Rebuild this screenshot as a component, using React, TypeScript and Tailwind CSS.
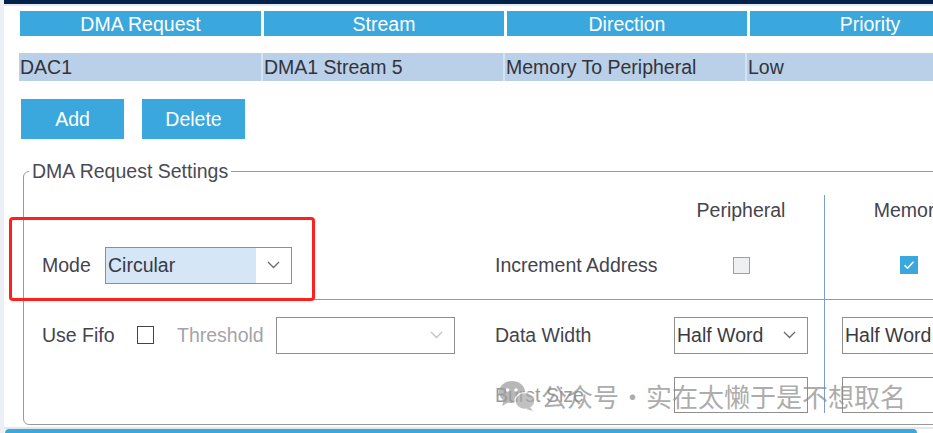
import React from 'react';

const Chevron = ({ color = '#6b6b6b' }: { color?: string }) => (
  <svg width="13" height="8" viewBox="0 0 13 8" fill="none">
    <path d="M1 1l5.5 5.5L12 1" stroke={color} strokeWidth="1.3" />
  </svg>
);

type SelectProps = {
  value?: string;
  width: string;
  fill?: string;
  chevron?: string;
  arrow?: boolean;
};

const Select = ({ value = '', width, fill = 'bg-white', chevron, arrow = true }: SelectProps) => (
  <div className={`flex h-[37px] ${width} border border-[#8e8e8e] bg-white`}>
    <div className={`flex flex-1 items-center pl-[2px] ${fill} text-[#3a3a44]`}>{value}</div>
    {arrow && (
      <div className="flex w-[35px] items-center justify-center">
        <Chevron color={chevron} />
      </div>
    )}
  </div>
);

const tableHeaders = ['DMA Request', 'Stream', 'Direction', 'Priority'];
const tableRow = ['DAC1', 'DMA1 Stream 5', 'Memory To Peripheral', 'Low'];

export default function App() {
  return (
    <div className="relative flex h-[433px] w-[933px] overflow-hidden bg-white font-['Liberation_Sans',Arial,sans-serif] text-[19.5px] leading-[22px]">
      {/* window edge */}
      <div className="w-[4px] shrink-0 bg-[#eceff3]" />

      <div className="flex min-w-0 flex-1 flex-col">
        <div className="h-[4px] bg-[#02214b]" />
        <div className="h-[2px] bg-[#e6e9ee]" />

        <div className="flex flex-1 flex-col pl-[16px]">
          {/* request table */}
          <div className="mt-[5px] grid grid-cols-[241px_240px_240px_240px] gap-[3px]">
            {tableHeaders.map((h) => (
              <div key={h} className="flex h-[25px] items-center justify-center bg-[#3aa8dc] text-white">
                {h}
              </div>
            ))}
          </div>
          <div className="mt-[17px] -ml-[1px] grid grid-cols-[242px_240px_240px_240px] gap-[2px] bg-[#d6e2ef]">
            {tableRow.map((c) => (
              <div key={c} className="flex h-[28px] items-center bg-[#b9d0e8] pl-[1px] text-[#33333b]">
                {c}
              </div>
            ))}
          </div>

          <div className="mt-[18px] flex gap-[18px] pl-[1px]">
            <button className="h-[40px] w-[103px] bg-[#3aa8dc] text-white">Add</button>
            <button className="h-[40px] w-[103px] bg-[#3aa8dc] text-white">Delete</button>
          </div>

          {/* settings group */}
          <fieldset className="mt-[21px] ml-[3px] w-[1000px] rounded-[6px] border border-[#9a9a9a] p-0">
            <legend className="ml-[5px] px-[3px] text-[#4a4a55]">DMA Request Settings</legend>

            <div className="grid grid-cols-[471px_163px_166px_1px_168px] grid-rows-[36px_68px_1px_70px_43px] pt-[13px] pb-[11px] text-[#44444e]">
              {/* row 1 */}
              <div />
              <div />
              <div className="flex justify-center pt-[4px]">Peripheral</div>
              <div className="row-span-5 bg-[#7f9bd6]" />
              <div className="flex justify-center pt-[4px]">Memory</div>

              {/* row 2 */}
              <div className="flex items-center pl-[18px]">
                <span className="w-[63px]">Mode</span>
                <Select value="Circular" width="w-[187px]" fill="bg-[#d5e6f6]" />
              </div>
              <div className="flex items-center">Increment Address</div>
              <div className="flex items-center justify-center">
                <div className="h-[17px] w-[17px] border border-[#a0a0a0] bg-[#eef0f3]" />
              </div>
              <div className="flex items-center justify-center">
                <div className="flex h-[18px] w-[18px] items-center justify-center bg-[#3aa8dc]">
                  <svg width="12" height="10" viewBox="0 0 12 10" fill="none">
                    <path d="M1.5 5.2l3 3L10.5 1.8" stroke="white" strokeWidth="1.6" />
                  </svg>
                </div>
              </div>

              {/* divider */}
              <div className="col-span-3 bg-[#7f9bd6]" />
              <div className="bg-[#7f9bd6]" />

              {/* row 3 */}
              <div className="flex items-center pl-[18px]">
                <span className="w-[95px]">Use Fifo</span>
                <div className="h-[18px] w-[17px] border-[1.5px] border-[#444]" />
                <span className="ml-[23px] w-[99px] text-[#a3a3a8]">Threshold</span>
                <Select width="w-[179px]" chevron="#c2c2c2" />
              </div>
              <div className="flex items-center">Data Width</div>
              <div className="flex items-center justify-center">
                <Select value="Half Word" width="w-[134px]" />
              </div>
              <div className="flex items-center justify-center">
                <Select value="Half Word" width="w-[134px]" />
              </div>

              {/* row 4 */}
              <div />
              <div className="flex items-end pb-[7px] text-[#9a9aa0]">Burst Size</div>
              <div className="flex items-end justify-center">
                <div className="h-[36px] w-[134px] border border-[#8e8e8e]" />
              </div>
              <div className="flex items-end justify-center">
                <div className="h-[36px] w-[134px] border border-[#8e8e8e]" />
              </div>
            </div>
          </fieldset>

          <div className="mt-[2px] -ml-[16px] h-[2px] bg-[#e3e6ea]" />
          <div className="-ml-[15px] h-[4px] w-[912px] rounded-t-[5px] bg-[#3aa8dc]" />
        </div>
      </div>

      {/* highlight box */}
      <div className="pointer-events-none absolute left-[9px] top-[217px] h-[84px] w-[306px] rounded-[4px] border-[3px] border-[#ff1f1f]" />

      {/* watermark */}
      <div className="pointer-events-none absolute left-[498px] top-[380px] flex items-center opacity-70">
        <svg width="38" height="32" viewBox="0 0 38 32" className="mr-[5px]">
          <ellipse cx="14" cy="12" rx="13" ry="11" fill="#9a9a9a" />
          <path d="M6 20l-2 6 7-4z" fill="#9a9a9a" />
          <circle cx="9.5" cy="10" r="1.8" fill="white" />
          <circle cx="18" cy="10" r="1.8" fill="white" />
          <ellipse cx="27" cy="21" rx="10" ry="8.5" fill="#a8a8a8" stroke="white" strokeWidth="1.5" />
          <path d="M32 27l3 4-7-2z" fill="#a8a8a8" />
        </svg>
        <div className="flex font-['Noto_Sans_CJK_SC',sans-serif] text-[26px] leading-[30px] text-[#8a8a8a]">
          <span>公众号</span>
          <span className="w-[27px] text-center">·</span>
          <span>实在太懒于是不想取名</span>
        </div>
      </div>
    </div>
  );
}
